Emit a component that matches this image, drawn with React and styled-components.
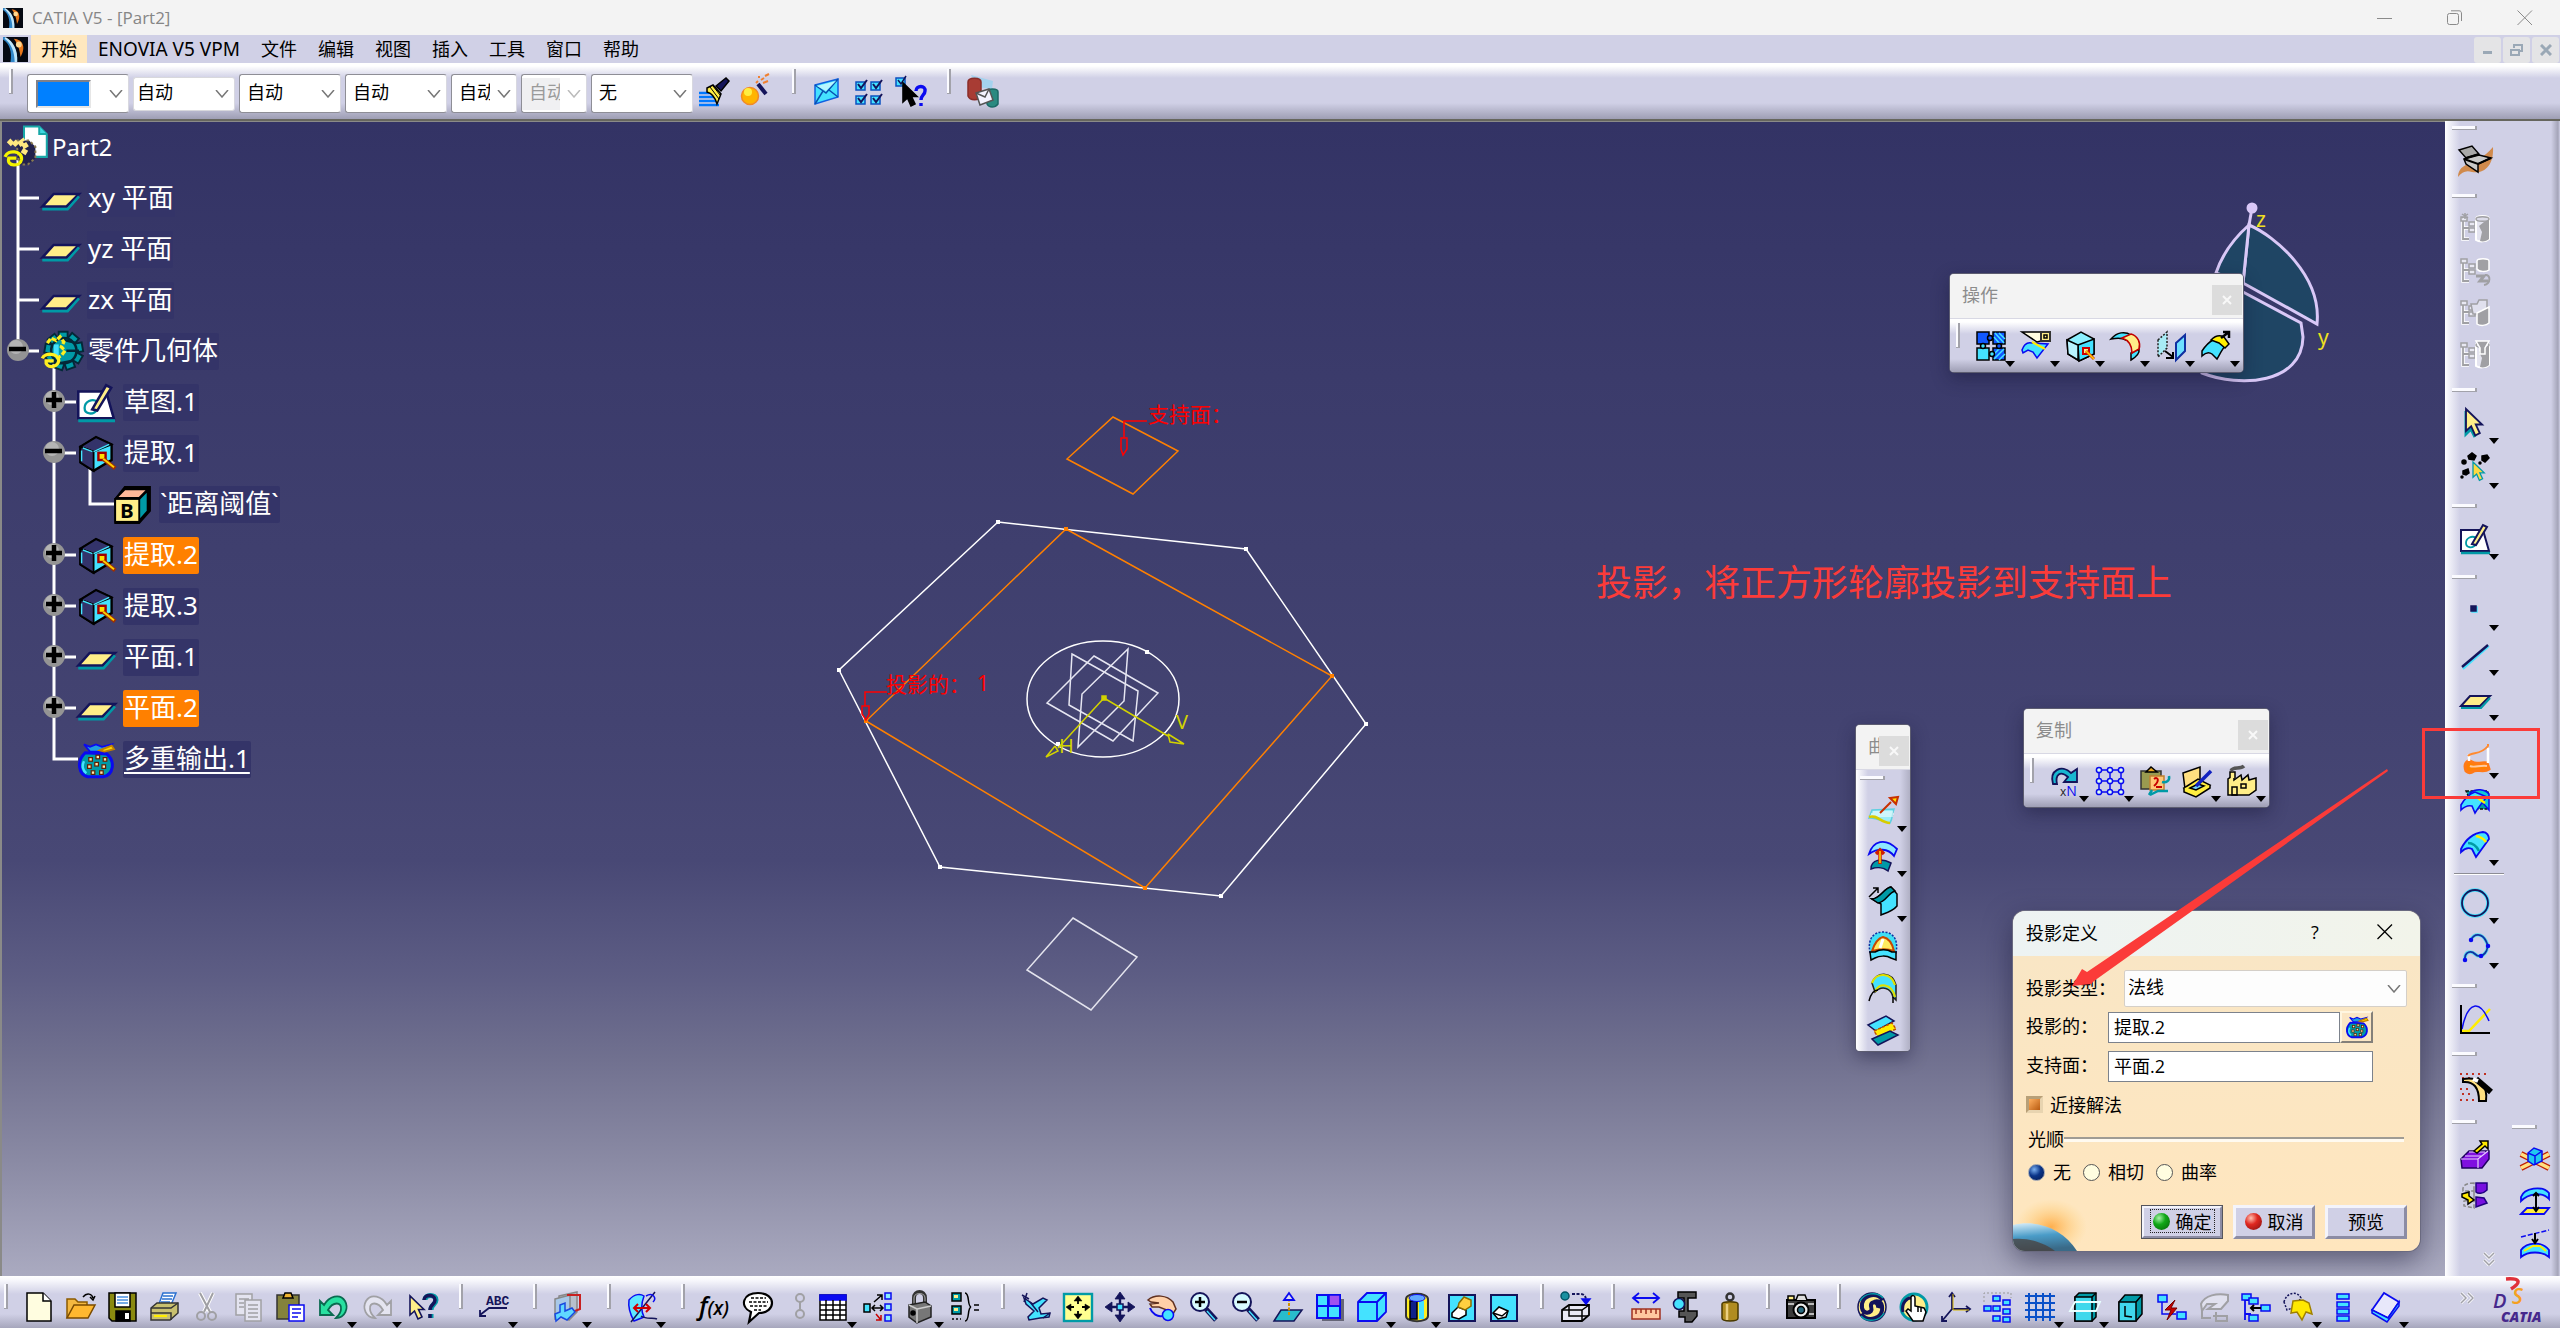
import React from 'react';
import styled, { createGlobalStyle, css } from 'styled-components';

const ui = '"Open Sans", "Noto Sans CJK SC", sans-serif';
const cad = '"Noto Sans", "Noto Sans CJK SC", sans-serif';
const C = {
  panel: '#d0d0e6', navy: '#14145a', blue: '#0a0af0', cyan: '#44e2ff', teal: '#009aa6',
  cream: '#ffee88', orange: '#ff8000', red: '#c80000', grey: '#a0a0a4', red2: '#fb3b39',
};

const Global = createGlobalStyle`
  * { box-sizing: border-box; }
  body { margin: 0; overflow: hidden; font-family: ${ui}; color: #000; }
  button, input, select { font: inherit; color: inherit; margin: 0; }
`;

/* ---------- icon drawings (30 x 30) ---------- */
const P = ({ d, f = 'none', s = '#000', w = 1.5, ...r }) => <path d={d} fill={f} stroke={s} strokeWidth={w} {...r} />;
const R = ({ x, y, w, h, f = 'none', s = '#000', k = 1.5, ...r }) => <rect x={x} y={y} width={w} height={h} fill={f} stroke={s} strokeWidth={k} {...r} />;
const O = ({ x, y, r, f = 'none', s = '#000', k = 1.5 }) => <circle cx={x} cy={y} r={r} fill={f} stroke={s} strokeWidth={k} />;

const SmallBoxes = ({ pts, w = 7, h = 5, s = C.blue, f = C.cyan }) => pts.map(([x, y]) => <R key={`${x}-${y}`} x={x} y={y} w={w} h={h} f={f} s={s} />);
const GreyTree = ({ children }) => (
  <>
    <P d="M3 6V25H9M3 14H9" s="#fff" w={3.5} />
    <P d="M3 6V25H9M3 14H9" s={C.grey} w={1.8} />
    <SmallBoxes pts={[[1, 3], [9, 8], [9, 14]]} s={C.grey} f="#e8e8f2" w={6} h={4} />
    {children}
  </>
);
const GreyCyl = () => (
  <><P d="M16 5C16 1 29 1 29 5V25C26 28 19 28 16 26Z" f="#e4e4f0" s="#fff" w={2} /><P d="M29 5V25C27 27 23 28 20 27L22 18L19 12L24 8Z" f={C.grey} s="none" /><P d="M16 5C16 2 29 2 29 5C29 8 16 8 16 5Z" f="#dcdcea" s={C.grey} /></>
);
const Cursor = ({ x = 0, y = 0, f = C.cream, s = C.navy }) => <P d="M0 0V19L4.500 15L8 23L12 21L8.500 13.500H14Z" f={f} s={s} w={1.6} transform={`translate(${x} ${y})`} />;
const Cube = ({ right }) => (
  <>
    <P d="M2 9L15 1L28 7V20L13 29L2 22Z" f={C.cyan} s="#000" w={2} />
    <P d="M2 9L13 13L28 7L15 1Z" f={right} s="#000" w={1.5} />
    <P d="M2 9L13 13V29L2 22Z" f={right} s="#000" w={1.5} />
    <P d="M4 10L12 13M13 13L26 7M3 12V21" s={C.cyan} w={1.2} />
  </>
);

const ICONS = {
  app: <><rect width="30" height="30" fill="#050912" /><P d="M2 0C12 6 18 16 17 30H9C11 18 8 8 0 3V0Z" f="#2f86c8" s="none" /><P d="M3 0C13 6 18 16 17 30H14C14 18 10 8 2 2Z" f="#bfe6fa" s="none" /><P d="M13 2C24 3 28 12 21 24C20 15 18 8 13 2Z" f="#e8781c" s="none" /><O x={19} y={9} r={3.500} f="#ffd890" s="none" /></>,
  brush: <><P d="M0 16H12M0 20H15M0 24H18M0 28H20" s="#0078ff" w={2.4} /><P d="M8 11L14 8L22 17L18 27C16 20 12 16 8 15Z" f="#ffee44" /><P d="M11 10L20 22M14 9L21 18" w={1} /><P d="M17 9L27 1L30 4L22 14Z" f={C.navy} /></>,
  wand: <><O x={9} y={19} r={8.500} f="#ffb400" s="#f08a28" /><O x={7} y={15} r={4} f="#ffee40" s="none" /><P d="M17 7L25 17" s={C.navy} w={4} /><P d="M15 6L17 4M20 3L23 1M22 6L27 4M18 1V-1M24 -1L28 -3" s="#f08030" w={2} /></>,
  mail: <><P d="M3 8L26 2V20L3 27Z" f={C.cyan} s="#1060e0" /><P d="M3 8L14 16L26 2M3 27L11 14M26 20L17 13" s="#0a50b0" /><P d="M5 9L24 4L14 14Z" f="#b8f6ff" s="none" /></>,
  grid4: <>{[[1, 4], [16, 4], [1, 18], [16, 18]].map(([x, y]) => <g key={x + '-' + y} transform={`translate(${x} ${y})`}><R x={1} y={1} w={9} h={8} f={C.cyan} s="#0a50c0" /><P d="M3 3L6 7L12 -1" s={C.navy} w={2} /></g>)}</>,
  whatis: <><R x={0} y={1} w={9} h={8} f={C.cyan} s="#0a50c0" /><P d="M2 3L5 7L10 -1" s={C.navy} /><Cursor x={7} y={6} f="#000" s="#000" /><P d="M20 14C20 8 30 8 29 14C29 18 25 18 25 23M25 26V29" s={C.blue} w={3.4} /></>,
  catalog: <><P d="M4 -2L26 4L25 12L10 10Z" f="#a4d2ee" s="none" /><P d="M1 5C1 0 14 0 14 5V19C12 24 3 24 1 19Z" f="#a83c34" s="#8a2c28" /><P d="M20 15C20 11 31 11 31 15V27C28 31 22 31 20 27Z" f="#2a8a80" s="#1b6a66" /><P d="M9 16L22 12L26 23L13 28Z" f="#f4f4ff" s="#555" /><P d="M9 16L18 20L22 12" s="#555" /></>,
  join: <><R x={1} y={1} w={12} h={12} f="#1258ff" /><R x={17} y={1} w={12} h={12} f="#1258ff" /><R x={1} y={17} w={12} h={12} f={C.cyan} /><R x={17} y={17} w={12} h={12} f="#1258ff" /><P d="M19 2L28 12M18 6L24 13M23 2L29 8M18 28L28 18M18 23L24 17M23 29L29 23" s={C.cyan} /><O x={14} y={7} r={2.500} f="#1258ff" /><O x={7} y={15} r={2.500} f={C.cyan} /><O x={23} y={15} r={2.500} f="#1258ff" /><O x={16} y={23} r={2.500} f={C.cyan} /></>,
  split: <><P d="M1 19C3 13 7 11 11 12L27 13L16 27L12 21L7 19L2 22Z" f={C.cyan} s={C.blue} /><P d="M11 11L24 18" s="#ffee00" w={2} /><P d="M1 1H20V10L16 11Z" f="#fffbe0" /><R x={20} y={1} w={9} h={9} f={C.cream} s="#333" k={2} /><R x={23} y={4} w={3} h={3} /></>,
  extract: <><P d="M1 9L15 1L28 8V23L13 30L2 23Z" f="#8cf0ff" /><P d="M12 14L28 8V23L13 30Z" f={C.cyan} /><P d="M1 9L12 14V29L2 23Z" f="#b8f4ff" /><R x={17} y={17} w={6} h={6} f={C.cream} s="#c00" k={2} /><P d="M20 20L28 28" s="#e04000" w={3} /><P d="M20 20L28 28" s="#ffd000" /></>,
  extractDark: <><Cube right="#33336a" /><R x={17} y={14} w={6} h={6} f="#ffe000" s="#a00000" k={2} /><P d="M21 19L31 27" s="#a03000" w={3.400} /><P d="M21 19L30 26" s="#ffd000" w={1.600} /></>,
  fillet: <><P d="M0 8C6 1 14 0 20 4L15 9C10 6 5 7 0 8Z" f={C.cyan} /><P d="M20 29V22L28 18C29 23 25 26 20 29Z" f={C.cyan} /><P d="M11 7L20 3C27 5 30 12 28 18L21 22C21 14 17 9 11 7Z" f={C.cream} s="#c00000" w={1.600} /></>,
  translate: <><P d="M2 9L11 1V17L2 26Z" f="#a8ecf6" s="#222" strokeDasharray="2 1.5" /><P d="M20 12L29 4V20L20 29Z" f="#6ee0ff" s="#1030a0" w={2} /><P d="M9 20L17 26M17 21V27H10" w={2} /></>,
  extrap: <><P d="M1 20C5 14 8 11 12 9L25 14C21 18 19 23 16 28L11 23C7 20 4 22 1 25Z" f={C.cyan} /><P d="M10 9C14 5 19 4 23 6L28 13L24 17L18 12Z" f="#ffee00" /><P d="M20 7L28 1M22 1H28V7" w={2.5} /></>,
  rotN: <><P d="M3 18C-1 4 12 -2 21 7L27 3V16H14L18 11C10 4 5 9 7 18Z" f="#18b8d0" s={C.navy} w={1.8} /><text x="10" y="30" fontSize="12" fontFamily={ui} fill="#222">x<tspan fill={C.blue} fontSize="14">N</tspan></text></>,
  pattern: <><P d="M4 3V27M15 3V27M26 3V27M3 4H27M3 15H27M3 26H27" s={C.blue} />{[4, 15, 26].map((x) => [4, 15, 26].map((y) => <O key={x + '-' + y} x={x} y={y} r={2.600} f="#dfe" s={C.blue} />))}</>,
  paste2: <><R x={1} y={5} w={20} h={18} f="#9a9a50" s="#333" /><P d="M6 6L11 1L17 6Z" f="#e8a820" /><P d="M10 10H24V24H10Z" f="#ffc878" s="#c08030" /><P d="M14 13C18 10 20 15 14 20M16 21H22" s={C.red} w={2} /><P d="M10 29L18 25H28M29 10C30 15 26 17 22 16M12 24L9 29" s={C.teal} w={2.5} /></>,
  power: <><P d="M1 7L18 1V14L3 23Z" f="#ffdf80" /><P d="M2 22L16 13L28 19L14 28Z" f="#ffee40" /><P d="M2 22V26L14 31L28 22V19" f="#ffee40" /><P d="M8 22L16 18L22 20L14 24Z" f="#6cd0ff" /><P d="M14 20L29 5" s="#1020c0" w={3.5} /></>,
  factory: <><P d="M1 29V13L7 9V14L14 9L15 14L21 9L22 14L29 12V24L22 29Z" f={C.cream} /><P d="M3 12V6H8V12" f={C.cream} /><P d="M4 5C6 0 13 4 17 0" s="#555" w={3.5} /><R x={5} y={21} w={5} h={8} /><R x={14} y={18} w={5} h={4} /></>,
  sweep: <><P d="M4 14L26 13C24 18 25 22 22 27C15 27 10 21 1 22Z" f="#9cecf6" s="#60cfe0" /><P d="M3 18H26M2 20H25M5 16H25" s="#fff" w={1} /><P d="M1 21C9 18 13 27 22 27" s="#d8cc00" w={2.5} /><P d="M12 17L23 6M22 2L30 1L28 8Z" f="#ffe000" s="#c83000" w={2} /></>,
  offset: <><P d="M1 13C5 0 17 -4 29 8L26 15C20 7 10 7 1 13Z" f="#8ee8ff" s={C.blue} w={1.800} /><P d="M3 28C3 18 14 17 23 22L20 30C15 26 8 26 3 28Z" f={C.teal} s={C.navy} /><P d="M12 23V10M8 13L12 9L16 13" s="#d02000" w={3.5} /><P d="M12 22V10" s="#ffe000" /></>,
  revolve: <><P d="M1 11L10 2M5 2H10V7" /><P d="M4 13C12 13 16 2 23 1L29 8V20C25 25 18 27 13 29V18Z" f={C.cyan} /><P d="M4 13C12 13 16 2 23 1L27 5C20 7 18 16 10 17Z" f={C.teal} /></>,
  fillS: <><P d="M2 22C-1 6 7 1 15 1C23 1 31 6 28 22Z" f="#40dff4" s="#1030a0" strokeDasharray="2 1.5" /><P d="M4 20C7 11 11 7 15 6C20 7 24 11 26 20C18 17 11 18 4 20Z" f="#ffea60" s="#c84800" w={2} /><P d="M15 8L12 17" s="#fff" w={3} /><P d="M2 21H7C12 18 19 18 24 21H28V29L23 27C18 24 11 25 7 27L3 29Z" f={C.cyan} /></>,
  blend: <><P d="M4 10C8 -2 24 -2 28 12V27L25 24C23 15 14 12 7 19Z" f={C.cyan} s="#222" /><P d="M4 10C8 -1 23 -1 27 12M7 19C10 9 24 10 27 24" s="#e0e000" w={2.200} /><P d="M1 28C3 20 6 17 10 17M25 24V30" /></>,
  layers: <><P d="M0 10L18 1L26 6L8 16Z" f={C.cyan} s={C.navy} /><P d="M6 16L24 8L28 14L10 22Z" f="#ffee00" s="#c05000" strokeDasharray="3 1.500" /><P d="M4 24L22 16L30 20L10 30Z" f={C.teal} s={C.navy} /></>,
  workbench: <><P d="M-2 31C-1 14 16 22 33 1C34 20 24 28 12 26C6 24 2 26 -2 31Z" f="#d08a4c" s="none" /><P d="M-1 4L12 0L19 8L6 12Z" f="#a8a8a8" /><P d="M4 13L19 9L31 12L18 18V26L6 18Z" f="#c8c8c8" /><P d="M4 13L18 18L31 12M6 12L19 8" w={2} /></>,
  g1: <GreyTree><GreyCyl /><P d="M5 -1V5M2 0L8 4M8 0L2 4" s={C.grey} /></GreyTree>,
  g2: <GreyTree><P d="M17 5C17 2 29 2 29 5V14C26 16 19 16 17 13Z" f={C.grey} s="#fff" /><P d="M16 20H24L20 25H28" s={C.grey} w={3} /><P d="M25 19C31 18 31 28 24 29" s={C.grey} w={2} /></GreyTree>,
  g3: <GreyTree><P d="M11 6H17L19 2H27V16H13Z" f="#e0e0ee" s={C.grey} /><P d="M17 15L29 9V25C26 28 20 28 17 26Z" f={C.grey} s="#fff" /></GreyTree>,
  g4: <GreyTree><GreyCyl /><P d="M16 1H29L25 8V14H20V8Z" f={C.grey} s="#fff" /></GreyTree>,
  select: <><P d="M6 3V26L11 21L15 29" s={C.teal} w={3} /><g transform="translate(6 1) scale(1.15)"><Cursor /></g></>,
  multi: <><P d="M8 3L12 0L16 3L14 7L9 6ZM22 3L27 2L29 5L25 9L22 7ZM3 18L8 16L9 20L6 22L3 21Z" f="#000" /><O x={4} y={9} r={2} f="#000" /><O x={2} y={24} r={1} f="#000" /><O x={20} y={10} r={1} f="#000" /><g transform="translate(13 9) scale(.8)"><Cursor f="#ffd840" s={C.teal} /></g></>,
  sketch: <><P d="M1 6H23L29 27H1Z" f="#fff" s={C.navy} w={2} /><P d="M1 29H30" s={C.teal} w={2.5} /><P d="M16 14C12 11 6 14 6 19C6 24 13 25 16 20" s={C.teal} w={1.8} /><P d="M12 20L23 1L27 3L16 21Z" f={C.cream} s={C.navy} w={2} /></>,
  point: <><R x={12} y={12} w={5} h={5} f={C.cyan} s={C.cyan} /><R x={11} y={11} w={5} h={5} f={C.navy} s={C.navy} /></>,
  line: <><P d="M3 29L29 6" s={C.cyan} w={2} /><P d="M2 27L28 5" s={C.navy} w={2.4} /></>,
  plane: <><P d="M1 21L10 11H30L20 21Z" f={C.cream} s={C.navy} w={2} /><P d="M1 23H21L30 13" s={C.teal} w={2} /></>,
  project: <><P d="M6 28C3 20 8 16 12 19C16 22 20 19 27 20L29 26C24 30 18 26 14 28C11 30 8 30 6 28Z" f={C.orange} s="#ff7a18" w={3} /><P d="M10 23C14 25 20 22 27 23" s="#ffc9a0" w={2} /><P d="M9 18V11M28 20V5" s="#fff" w={2.5} /><P d="M8 13C12 8 20 13 28 3V1" s="#ff8a30" w={2} /></>,
  intersect: <><P d="M6 3H28V21H14Z" f={C.teal} s="#111" strokeDasharray="3 1.500" /><P d="M10 5C16 0 25 1 29 6V22L22 14Z" f="#10c8d8" s={C.blue} /><P d="M1 17C5 10 9 6 15 4L27 9C23 13 20 17 15 25L12 18C8 17 4 19 1 22Z" f={C.cyan} s={C.blue} w={1.600} /><P d="M15 8L25 15" s="#ffee00" w={2.500} /></>,
  surf: <><P d="M1 19C6 9 14 3 23 2C27 2 29 6 29 9L16 27L12 19C8 17 4 19 1 22Z" f={C.cyan} s={C.blue} w={1.800} /><P d="M8 13C14 13 17 17 19 21" s={C.teal} w={2.5} /><P d="M16 6C21 7 24 9 26 12" s="#ffee00" w={2.5} /></>,
  circle: <><ellipse cx="15" cy="15" rx="13" ry="13" fill="none" stroke={C.cyan} strokeWidth="3.5" /><ellipse cx="15" cy="15" rx="13" ry="13" fill="none" stroke={C.navy} strokeWidth="1.8" /></>,
  spline: <><P d="M5 28C4 17 12 18 15 21C22 28 31 16 26 8C22 0 14 0 11 7" s="#60dcf0" w={3.5} /><P d="M5 28C4 17 12 18 15 21C22 28 31 16 26 8C22 0 14 0 11 7" s="#1030a0" w={1.8} /><O x={5} y={27} r={1.500} f={C.blue} s={C.blue} /><O x={11} y={7} r={1.500} f={C.blue} s={C.blue} /><O x={28} y={13} r={1.500} f={C.blue} s={C.blue} /><O x={21} y={23} r={1.500} f={C.blue} s={C.blue} /></>,
  graph: <><P d="M2 27L9 27L30 5" s="#ffee00" w={2.500} /><P d="M2 25C8 -4 20 -4 29 17" s={C.blue} /><P d="M1 1V29H30" w={2} /></>,
  magic: <><P d="M0 2H28M2 6H14M0 17H10M2 22H14M0 28H14" s="#c03020" w={2} strokeDasharray="2 4" /><P d="M3 10C14 9 19 16 19 29H26C28 14 20 4 3 7Z" f="#ffdf80" w={2} /><P d="M16 7L31 20" w={6} /><P d="M13 7L18 9" s="#fff" w={4} /></>,
  extrude: <><P d="M1 19L9 11H29V19L22 28H2Z" f="#8010e0" s="#200060" /><P d="M1 19H18L28 11M18 19V28M5 16H22M9 12H25" s="#e8d0ff" w={1.2} /><P d="M14 11L22 4L20 1L28 1L28 9L25 6L17 13Z" f="#ffe800" /></>,
  mirror: <><P d="M16 1H27V8C23 12 18 12 16 10ZM16 15L24 16L27 21L16 25Z" f="#7810e0" s="#200080" /><P d="M14 1C7 1 2 3 3 9H14V17L4 19V24L14 26Z" s="#888" strokeDasharray="4 2" /><P d="M2 12L9 10V14L14 18L8 22V18L2 15Z" f="#ffe800" /></>,
  cubeX: <><P d="M1 9L29 23M29 9L1 23" s="#c02000" w={6} /><P d="M1 9L29 23M29 9L1 23" s="#ffdf80" w={3.5} /><P d="M8 8L14 3L22 6V16L14 20L8 16Z" f="#20c8f0" s={C.blue} /><P d="M8 8L15 11L22 6M15 11V20" s={C.blue} /></>,
  arr1: <><P d="M1 10C4 1 22 -2 29 6V12C22 4 8 7 1 14Z" f={C.cyan} s={C.blue} w={1.8} /><P d="M1 27L7 21H29L24 27Z" f="#ffee40" s={C.blue} w={1.800} /><P d="M16 6V23M13 9L16 6L19 9M13 20L16 24L19 20" w={2} /></>,
  arr2: <><P d="M1 8L29 1" s={C.blue} strokeDasharray="5 2" /><P d="M1 28V21C7 13 22 12 29 21V28C22 22 8 22 1 28Z" f={C.cyan} s={C.blue} w={1.800} /><P d="M4 22L13 17H20L26 22" s="#ffee00" w={2} /><P d="M15 4V14M12 10L15 14L18 10" w={2} /></>,
  new: <><P d="M3 1H19L27 9V29H3Z" f="#fffde0" /><P d="M19 1V9H27" f="#fff" /></>,
  open: <><P d="M1 26V7H9L12 10H21V14" f="#f4b840" s="#8a5a00" /><P d="M1 26L8 13H29L22 26Z" f="#ffb830" s="#7a4a00" /><P d="M17 5C21 0 26 2 27 6M24 5L27 8L29 4" /></>,
  save: <><P d="M1 1H28V29H4L1 26Z" f="#8a8a10" /><R x={7} y={1} w={15} h={14} f="#fff" /><P d="M9 5H20M9 8H20M9 11H20" s="#4a90e0" /><R x={8} y={19} w={14} h={10} f="#000" /><R x={17} y={21} w={4} h={6} f="#fff" s="none" /></>,
  print: <><P d="M9 12L13 1H26L21 13Z" f="#fff" s="#2a70d0" /><P d="M13 4H23M12 7H22M11 10H20" s="#2a70d0" /><P d="M1 16L7 11H28V21L20 28H1Z" f="#c8c070" s="#333" /><P d="M1 16H21L28 11M1 21H21V28" s="#333" /><P d="M4 24H17" s="#ffee00" w={2} /></>,
  cut: <><P d="M8 1L18 20M21 1L12 20" s="#fff" w={4} /><P d="M8 1L18 20M21 1L12 20" s={C.grey} w={2} /><O x={9} y={24} r={4} s={C.grey} k={2} /><O x={20} y={24} r={4} s={C.grey} k={2} /></>,
  copy: <><R x={2} y={2} w={16} h={21} f="#e4e4f0" s={C.grey} /><R x={11} y={8} w={16} h={21} f="#e4e4f0" s={C.grey} /><P d="M5 7H15M5 11H10M5 15H10M14 13H24M14 17H24M14 21H24M14 25H24" s={C.grey} /></>,
  paste: <><R x={1} y={3} w={22} h={24} f="#84823c" s="#333" /><P d="M7 6L9 1H15L17 6Z" f="#f0b430" /><R x={13} y={13} w={15} h={16} f="#fff" s={C.blue} /><P d="M16 17H25M16 21H25M16 25H22" s={C.blue} /></>,
  undo: <P d="M2 9V23H15L10 18C15 9 24 10 23 17C23 21 21 23 18 26C27 26 31 16 27 9C22 1 11 4 6 13Z" f="#28e0a0" s="#0a6a50" w={1.8} />,
  redo: <P d="M28 9V23H15L20 18C15 9 6 10 7 17C7 21 9 23 12 26C3 26 -1 16 3 9C8 1 19 4 24 13Z" f="#e4e4f0" s={C.grey} w={1.8} />,
  help: <><Cursor x={2} y={4} /><P d="M17 8C17 2 28 2 28 8C28 13 23 12 23 18M23 22V26" s={C.teal} w={5} /><P d="M16 8C16 2 27 2 27 8C27 13 22 12 22 18M22 22V26" s={C.navy} w={3.5} /></>,
  abc: <><text x="7" y="13" fontSize="13" fontWeight="700" fontFamily='"Liberation Mono", monospace' fill={C.navy}>ABC</text><P d="M28 16H10L1 23M1 18V24H7" s={C.navy} w={1.8} /></>,
  stamp: <><P d="M6 4L24 0V20L16 28L6 24Z" f="#b8c0cc" s="#888" /><P d="M2 7L17 3V22L2 27Z" f="#a8c8e8" s="#888" /><P d="M14 3H27V17L17 21" s="#c82020" w={2} /><P d="M7 13L12 11V19L19 16L22 20L14 28L8 25L3 29L2 22L7 20Z" f="#60d8ff" s="#1848e0" /></>,
  measureSurf: <><P d="M2 8C8 1 14 2 17 4C14 12 14 19 17 25L7 29C3 22 1 15 2 8Z" f="#60e8ff" s={C.blue} /><P d="M4 30L28 0M14 24C20 28 26 25 30 27" s={C.navy} /><P d="M8 16H22M11 12L7 16L11 20M19 12L23 16L19 20" s="#d00000" w={2} /><P d="M19 4C26 0 30 6 26 10" s={C.blue} /></>,
  fx: <text x="-2" y="23" fontSize="25" fontStyle="italic" fontWeight="600" fontFamily={ui} fill="#000">f<tspan fontSize="19">(x)</tspan></text>,
  comment: <><P d="M15 1C34 1 33 21 16 21L6 30L8 20C-4 14 0 1 15 1Z" f="#fff" w={2.200} /><P d="M8 6H23M6 10H25M7 14H24M11 18H18" strokeDasharray="3 1.500" /></>,
  chain: <><O x={15} y={6} r={4} s={C.grey} k={2} /><O x={15} y={22} r={4} s={C.grey} k={2} /><P d="M15 10V18" s={C.grey} w={2} /></>,
  table: <><R x={2} y={3} w={26} h={25} f="#fff" /><R x={2} y={3} w={26} h={5} f={C.blue} s={C.blue} /><P d="M2 13H28M2 18H28M2 23H28M8 8V28M15 8V28M22 8V28" /></>,
  tree: <><R x={1} y={12} w={6} h={8} f={C.cyan} /><SmallBoxes pts={[[22, 1], [22, 12], [22, 23]]} w={6} h={6} f="#8ef" /><P d="M9 16H20M12 13L9 16L12 19M17 13L20 16L17 19M11 10L19 3M14 3H19V8" /><P d="M13 22L18 28M18 23V28H13" s={C.red} /></>,
  lock: <><P d="M9 12V6C9 -2 20 -2 20 6V11" s="#333" w={4} /><P d="M9 12V6C9 0 20 0 20 6V11" s="#999" w={1.2} /><P d="M4 13L20 10L26 14V25L12 31L4 25Z" f="#777" s="#222" /><P d="M12 17V31M12 17L26 14M4 13L12 17" s="#ccc" /><O x={8} y={21} r={2} f="#000" /></>,
  rules: <><R x={2} y={1} w={9} h={8} f={C.teal} /><R x={2} y={14} w={9} h={8} f={C.teal} /><R x={4} y={3} w={4} h={3} f={C.cream} s="none" /><R x={4} y={16} w={4} h={3} f={C.cream} s="none" /><P d="M2 27H11" strokeDasharray="2 2" /><P d="M15 1C20 1 17 14 21 15C17 16 20 29 15 29M24 13H29M24 18H29" /></>,
  fly: <><P d="M3 6L12 12L22 6L26 8L18 16L20 22L29 21L28 25L19 26L8 28L7 25L13 19L5 12Z" f={C.cyan} s={C.navy} /><P d="M1 3L8 7M6 1L3 10M22 26L29 21M9 10L17 20" s={C.navy} /></>,
  fit: <><R x={1} y={2} w={28} h={27} f="#ffff90" s={C.teal} k={2.400} /><P d="M15 12V6M15 19V25M11 15H5M19 15H25" w={1.800} /><P d="M11 9L15 4L19 9ZM11 22L15 27L19 22ZM8 12L3 15L8 19ZM22 12L27 15L22 19Z" f="#000" w={.5} /></>,
  pan: <><P d="M15 4V26M4 15H26" s={C.navy} w={2.400} /><P d="M10 7L15 0L20 7ZM10 23L15 30L20 23ZM7 10L0 15L7 20ZM23 10L30 15L23 20Z" f={C.navy} s={C.navy} w={.8} /><R x={12} y={12} w={6} h={6} f={C.cyan} s={C.navy} /></>,
  rotate: <><P d="M1 8C8 2 20 3 26 10L29 17L24 25L20 18L12 15H5L3 12L12 11L4 10Z" f="#ffd0a8" s="#603020" /><O x={21} y={23} r={5.500} f={C.cyan} s={C.blue} /><P d="M3 16C5 22 11 25 15 24" s={C.blue} w={2} /></>,
  zin: <><P d="M17 17L27 28" s={C.navy} w={5} /><P d="M18 19L26 28" s={C.cyan} w={1.5} /><O x={11} y={10} r={9} f="#d8fbff" s={C.navy} k={2} /><P d="M6 10H16M11 5V15" w={2.5} /></>,
  zout: <><P d="M17 17L27 28" s={C.navy} w={5} /><P d="M18 19L26 28" s={C.cyan} w={1.5} /><O x={11} y={10} r={9} f="#d8fbff" s={C.navy} k={2} /><P d="M6 10H16" w={2.5} /></>,
  normal: <><P d="M1 29L8 18H29L21 29Z" f="#28bccc" s={C.navy} /><P d="M16 23V3" s="#d09000" strokeDasharray="3 1.500" w={2} /><P d="M11 8L16 1L21 8Z" s={C.blue} w={1.800} f="#dde" /></>,
  views: <><R x={7} y={7} w={22} h={22} f="#667" s="none" /><R x={2} y={3} w={23} h={23} f={C.cyan} s={C.blue} k={2} /><R x={14} y={3} w={11} h={11} f="#a050f0" s={C.blue} /><P d="M2 14H25M13 3V26" s={C.blue} w={2} /></>,
  iso: <><P d="M1 10L10 1H29V20L20 29H1Z" f={C.cyan} s={C.blue} w={1.800} /><P d="M1 10H20L29 1M20 10V29" s={C.blue} w={1.8} /></>,
  shade: <><P d="M4 7C4 0 26 0 26 7V24C26 31 4 31 4 24Z" f="#ffee20" s="#333" w={2} /><R x={8} y={9} w={7} h={18} f="#10208a" s="#000" /><R x={17} y={9} w={5} h={18} f={C.cyan} s="none" /><ellipse cx="15" cy="6" rx="8" ry="3.500" fill="#60a8ff" stroke={C.blue} /></>,
  hide: <><R x={2} y={3} w={26} h={26} f={C.cyan} s={C.navy} k={2} /><P d="M5 21L11 15L19 18V23L12 27L5 25Z" f="#fff" /><P d="M12 11L17 5L24 8V14L18 18L11 15Z" f="#ffd040" s="#8a6a00" /></>,
  swap: <><R x={2} y={3} w={26} h={26} f={C.cyan} s={C.navy} k={2} /><P d="M4 21L10 15L19 19L17 25L9 27Z" f="#fff" /><P d="M4 21L13 24L19 19" /></>,
  box3d: <><P d="M2 18L9 13H29V23L22 29H2Z" f="#e8e8f4" w={1.8} /><P d="M2 18H22L29 13M22 18V29M9 13V24H28" /><O x={5} y={4} r={4} f="#1890a0" s="#056" /><P d="M12 2H20C25 2 26 5 26 9" s={C.navy} w={2} strokeDasharray="3 1.500" /><P d="M22 7L26 12L30 7Z" f={C.blue} s={C.blue} /></>,
  ruler: <><P d="M2 6H28M8 1L2 6L8 11M22 1L28 6L22 11" s={C.blue} w={1.8} /><R x={1} y={17} w={28} h={10} f="#ffc8a0" s="#a03020" /><P d="M5 17V22M10 17V21M15 17V22M20 17V21M25 17V22" s="#a03020" /></>,
  caliper: <><P d="M5 0H23V6H15V19H24V24L19 30H12V25H6V19H11V6H5Z" f="#555" /><O x={6} y={12} r={5.500} f={C.cyan} s={C.navy} /></>,
  weight: <><O x={15} y={5} r={3.500} s="#333" k={2.500} /><P d="M7 12C7 9 23 9 23 12V26C23 30 7 30 7 26Z" f="#b08c20" s="#4a3a00" /><P d="M12 12V28" s="#ecd080" w={2.500} /></>,
  camera: <><R x={1} y={8} w={28} h={18} f="#3a3a3a" k={2} /><R x={2} y={4} w={6} h={4} f={C.cream} /><P d="M10 8L12 3H19L21 8" f="#ddd" /><P d="M2 12H8M22 12H28M23 22H28" s="#bbb" w={2} /><O x={15} y={18} r={7.500} f="#eee" k={2} /><O x={15} y={18} r={3.500} f="#2a6a80" /></>,
  update: <><O x={15} y={15} r={14} f={C.cream} s={C.navy} k={1.500} /><P d="M26 8C19 -1 3 3 5 16C6 21 11 22 14 19C16 16 12 14 15 11C18 9 22 12 21 16M4 22C11 31 27 27 25 14C24 9 19 8 16 11" s={C.navy} w={4} /><P d="M3 9C7 1 20 -1 26 6M27 21C23 29 10 31 4 24" s={C.teal} w={1.500} /></>,
  manual: <><O x={15} y={15} r={13} f={C.cream} s={C.teal} k={3} /><P d="M4 20C2 11 8 5 14 6" s={C.navy} w={3} /><P d="M12 5C13 3 16 3 16 6V14L25 16L27 20L24 29H14L7 19L9 17L12 19Z" f="#fff" /><P d="M19 15V20M22 16V20" /></>,
  axis: <><P d="M11 17V1M11 17H29M11 17L1 29M8 5L11 1L14 5M25 14L29 17L25 20M1 24V29H6" s={C.navy} w={1.800} /><P d="M12 2V18H28" s="#d8b800" w={1} /></>,
  struct: <><SmallBoxes pts={[[10, 4], [20, 8], [1, 14], [10, 14], [20, 17], [10, 24], [20, 25]]} /><P d="M1 10V1H28V6" s="#999" strokeDasharray="2 2" w={1} /></>,
  grid: <P d="M4 1V29M11 1V29M18 1V29M25 1V29M0 4H30M0 11H30M0 18H30M0 25H30" s="#0a50c8" w={2} />,
  thick: <><P d="M5 5L9 1H26V25L22 29H5Z" f={C.teal} /><R x={5} y={5} w={17} h={24} f="#40d8ec" /><P d="M22 5L26 1" /><P d="M0 19L5 10H30L26 19Z" s="#e8ffff" w={1.800} /></>,
  cube: <><P d="M4 10L10 3H27V22L21 29H4Z" f={C.teal} /><R x={4} y={10} w={17} h={19} f="#40d8ec" /><P d="M21 10L27 3M10 14V24L17 25" /></>,
  bolt: <><SmallBoxes pts={[[1, 3], [20, 20]]} w={9} h={7} /><P d="M5 10V22H19" s={C.blue} /><P d="M18 8L8 18H14L10 28L20 16H14Z" f={C.red} s="#700" w={1} /></>,
  hand: <><P d="M2 12C6 3 18 1 29 3V9L22 17H9L16 12H8L3 19Z" f="#e0e0ee" s={C.grey} w={2} /><P d="M3 18V26H12M14 24H28V29H17V20" s={C.grey} w={2} /></>,
  insert: <><P d="M4 5V28M4 8H10M4 22H10M12 16H20" s={C.blue} w={1.800} /><SmallBoxes pts={[[1, 2], [8, 6], [8, 23], [20, 13]]} w={9} h={6} /><P d="M10 16H20M13 13L10 16L13 19" w={2} /></>,
  shape: <><P d="M1 10C3 1 14 -2 18 6L12 15L4 18Z" s={C.navy} strokeDasharray="2 1.500" /><P d="M10 9L20 8L26 11L29 22L23 20L19 28L14 20L8 21Z" f="#ffe800" s="#a08000" /></>,
  stack: <SmallBoxes pts={[[9, 2], [9, 10], [9, 17], [9, 24]]} w={12} h={5} />,
  eraser: <><P d="M2 18L14 1L29 10L18 26Z" f="#e8e8fa" s={C.blue} w={1.800} /><P d="M2 18V21L17 30L29 14V10L18 26Z" f={C.cyan} s={C.blue} /></>,
  sack: <><P d="M6 9C-2 17 1 27 8 29H21C30 27 31 16 24 10Z" f={C.teal} s={C.blue} w={2.500} /><P d="M5 16C3 20 4 24 7 26" s={C.cyan} w={2} /><P d="M5 2L10 8H22L28 2L20 4L15 2L10 4Z" f="#20a0e0" s={C.blue} /><P d="M18 7L28 3L30 6L22 8Z" f="#ffd800" s="#c08000" />{[[10, 14], [16, 12], [22, 14], [9, 20], [15, 18], [21, 20], [12, 25], [19, 25]].map(([x, y]) => <R key={x + '-' + y} x={x - 1} y={y - 1} w={3} h={3} f="#ffe8b0" s="#602000" k={1} />)}</>,
  gear: <>{[0, 40, 80, 120, 160, 200, 240, 280, 320].map((a) => <R key={a} x={14} y={-1} w={7} h={7} f={C.teal} s="#042838" transform={`rotate(${a} 18 14)`} />)}<O x={18} y={14} r={10} f={C.teal} s="#042838" k={2} /><P d="M14 24L25 22M16 5L28 8M20 14H30" s="#042838" w={2} /><P d="M5 8L8 4L12 6L15 3L18 7L16 11L19 14L16 18L12 20" s="#ffee20" w={2.600} strokeDasharray="4 1.500" /><P d="M12 9V18" s={C.cyan} w={4} /><P d="M1 20C3 15 14 16 14 22C13 28 3 28 4 22H10" s="#ffee20" w={2.600} /></>,
  part: <><P d="M15 -2H27L33 4V22H15Z" f="#fff" s="#18a8a8" w={1.600} /><P d="M27 -2V4H33" f="#40d8e0" s="#18a8a8" /><P d="M9 9H19L24 14V23L18 28H11Z" f="#22224c" s="#887a50" strokeDasharray="2 2" /><P d="M3 12L6 9L10 13L14 10L17 15L14 20" s="#ffe880" w={4.500} strokeDasharray="4 1.500" /><P d="M0 22C2 16 14 17 13 24C12 30 1 30 3 23H9" s="#f4f400" w={2.600} /></>,
  block: <><P d="M1 10L9 0H30V20L21 30H1Z" f="#000" /><P d="M2 9L9 2H28L21 9Z" f="#ffb898" /><P d="M21 10L28 3V20L21 28Z" f={C.teal} /><R x={1} y={10} w={20} h={19} f={C.cream} /><text x="5" y="26" fontSize="17" fontWeight="700" fontFamily={ui}>B</text></>,
};

const IconSvg = styled.svg`
  width: ${(p) => p.$size || 30}px;
  height: ${(p) => p.$size || 30}px;
  overflow: visible;
  display: block;
  flex: none;
`;
const Icon = ({ name, size }) => <IconSvg $size={size} viewBox="0 0 30 30" aria-hidden="true">{ICONS[name]}</IconSvg>;

/* ---------- tool slots and sections ---------- */
const ToolButton = styled.button`
  display: grid;
  grid-template: 36px 9px / 36px 9px;
  width: ${(p) => (p.$narrow ? 33 : p.$v || p.$arrow ? 45 : 42)}px;
  height: ${(p) => (p.$v && !p.$arrow ? 42 : 45)}px;
  margin: 0;
  padding: 0;
  border: 0;
  background: none;
  flex: none;
  align-content: start;
  justify-content: start;
  & > svg:first-child { place-self: end; }
`;
const Tri = styled.svg`
  grid-area: 2 / 2;
  width: 10px;
  height: 6px;
  justify-self: end;
`;
const Tool = ({ spec, v }) => {
  const name = spec.replace(/[*-]/g, '');
  const arrow = spec.includes('*');
  return (
    <ToolButton $v={v} $arrow={arrow} $narrow={spec.includes('-')} aria-label={name}>
      <Icon name={name} />
      {arrow && <Tri viewBox="0 0 10 6"><path d="M0 0H10L5 6Z" /></Tri>}
    </ToolButton>
  );
};

const Section = styled.div`
  display: flex;
  flex-direction: ${(p) => (p.$v ? 'column' : 'row')};
  align-items: flex-start;
  flex: none;
  ${(p) => (p.$v ? css`padding-bottom: 10px;` : css`padding-right: 13px;`)}
`;
const Grip = styled.span`
  flex: none;
  ${(p) => (p.$v ? css`width: 25px; height: 4px; margin: 2px 0 10px;` : css`width: 4px; height: 25px; margin: 0 10px 0 2px;`)}
  background: #fbfbff;
  border-right: 2px solid #a2a2aa;
  border-bottom: 1px solid #a2a2aa;
`;
const Slots = styled.div`
  display: flex;
  flex-direction: ${(p) => (p.$v ? 'column' : 'row')};
  ${(p) => (p.$v ? css`padding-left: 2px;` : css`padding-top: 2px;`)}
`;
const Divider = styled.hr`
  width: 50px;
  height: 2px;
  margin: 4px 0 7px;
  border: 0;
  border-top: 1px solid #8c8c94;
  background: #fff;
  align-self: flex-start;
`;
const Tools = ({ list, v }) => (
  <Section $v={v}>
    <Grip $v={v} />
    <Slots $v={v}>{list.split(' ').map((t, i) => (t === '|' ? <Divider key={i} /> : <Tool key={i} spec={t} v={v} />))}</Slots>
  </Section>
);

/* ---------- frame ---------- */
const Page = styled.div`
  position: relative;
  height: 100vh;
  display: grid;
  grid-template-rows: 35px 28px 58px minmax(0, 1fr) 52px;
  background: ${C.panel};
`;
const TitleBar = styled.header`
  display: flex;
  align-items: center;
  padding: 0 0 0 3px;
  background: #f3f3f3;
  color: #868686;
  font-size: 17px;
`;
const Title = styled.h1`
  margin: 0;
  padding-left: 9px;
  flex: 1;
  font: inherit;
`;
const CaptionButton = styled.button`
  width: 70px;
  height: 34px;
  border: 0;
  padding: 0;
  background: none;
  display: grid;
  place-items: center;
`;
const MenuBar = styled.nav`
  display: flex;
  align-items: stretch;
  gap: 1px;
  padding-left: 3px;
  font-size: 18px;
  background: ${C.panel};
`;
const AppMark = styled.span`
  width: 27px;
  display: flex;
  align-items: center;
`;
const MenuItem = styled.button`
  border: 0;
  padding: 0 10px;
  background: ${(p) => (p.$on ? '#ffe8bf' : 'none')};
  font-size: ${(p) => (p.$latin ? 19 : 18)}px;
  font-family: ${cad};
  line-height: 26px;
  white-space: nowrap;
`;
const MdiButtons = styled.div`
  margin-left: auto;
  display: flex;
  gap: 2px;
  padding: 2px 1px 0 0;
`;
const MdiButton = styled.button`
  width: 27px;
  height: 26px;
  border: 0;
  border-radius: 3px;
  padding: 0;
  background: #e4e4e6;
  display: grid;
  place-items: center;
`;
const barFill = css`background: linear-gradient(#fff 0, #fff 3px, ${C.panel} 15px, ${C.panel} 40px, #9e9eb4 100%);`;
const TopBar = styled.div`
  display: flex;
  align-items: flex-start;
  padding: 6px 0 0 7px;
  ${barFill}
  border-bottom: 2px solid #66665e;
`;
const Combos = styled.div`
  display: flex;
  align-items: center;
  gap: 4px;
  height: 49px;
  padding-left: 4px;
`;
const ComboBox = styled.label`
  display: grid;
  width: ${(p) => p.$w}px;
  height: ${(p) => (p.$flat ? 34 : 39)}px;
  align-items: center;
  background: #fff;
  border: 1px solid ${(p) => (p.$flat ? '#d8d8dc' : '#8e8e96')};
  border-right-color: #d8d8e0;
  border-radius: 3px;
  overflow: hidden;
  & > * { grid-area: 1 / 1; }
`;
const Select = styled.select`
  appearance: none;
  min-width: 0;
  width: ${(p) => (p.$clip ? 'calc(100% - 26px)' : '100%')};
  height: 32px;
  padding: 0 0 4px ${(p) => p.$pad || 7}px;
  border: 0;
  background: ${(p) => (p.disabled ? '#f0f0f2' : 'transparent')};
  color: ${(p) => (p.disabled ? '#9a9a9a' : '#000')};
  opacity: 1;
  font-size: 18px;
  text-overflow: clip;
`;
const Chevron = styled.svg`
  width: 14px;
  height: 8px;
  justify-self: end;
  margin-right: 5px;
  pointer-events: none;
`;
const Swatch = styled.span`
  width: 55px;
  height: 28px;
  margin-left: 8px;
  background: #0080ff;
  border: 2px solid #808088;
  border-right-color: #e6e6e6;
  border-bottom-color: #e6e6e6;
  pointer-events: none;
`;
const Combo = ({ w, text, label, swatch, disabled, flat }) => (
  <ComboBox $w={w} $flat={flat}>
    <Select aria-label={label} disabled={disabled} $clip={w < 80} $pad={flat ? 3 : 7} defaultValue="0"><option value="0">{text}</option></Select>
    {swatch && <Swatch />}
    <Chevron viewBox="0 0 14 8"><path d="M1 0L7 7L13 0" fill="none" stroke={disabled ? '#bbb' : '#777'} strokeWidth="1.5" /></Chevron>
  </ComboBox>
);

const Body = styled.main`
  display: grid;
  grid-template-columns: minmax(0, 1fr) 115px;
  min-height: 0;
`;
const Viewport = styled.section`
  position: relative;
  overflow: hidden;
  border-left: 2px solid #8a8a88;
  border-top: 1px solid #8a8a88;
  background: linear-gradient(#333365 0, #3b3b6b 22%, #434371 52%, #484875 64%, #5d5d84 74%, #70708f 81%, #8a8aa4 90%, #aaaac0 100%);
`;
const Tree = styled.ul`
  position: relative;
  margin: 0 0 0 -2px;
  padding: 0;
  list-style: none;
  font-family: ${cad};
  font-size: 26px;
  color: #fff;
`;
const TreeRow = styled.li`
  display: flex;
  align-items: center;
  height: 51px;
`;
const Joint = styled.svg`
  width: 36px;
  height: 51px;
  flex: none;
  overflow: visible;
`;
const TreeIcon = styled.span`
  display: grid;
  width: 48px;
  height: 51px;
  place-items: center;
  & > * { grid-area: 1 / 1; }
  & > ${Joint} { justify-self: start; }
`;
const NodeLabel = styled.span`
  margin-left: 3px;
  padding: 0 1px;
  height: 37px;
  line-height: 35px;
  border-radius: 2px;
  white-space: pre;
  font-size: ${(p) => (p.$plain ? 24 : 26)}px;
  background: ${(p) => (p.$hot ? C.orange : p.$plain ? 'none' : '#343468')};
  text-decoration: ${(p) => (p.$under ? 'underline' : 'none')};
  text-decoration-thickness: 2px;
  text-underline-offset: 4px;
`;
const JointArt = ({ kind }) => (
  <Joint aria-hidden="true">
    <g stroke="#fff" strokeWidth="3" fill="none">
      {kind === 'tee' && <path d="M18 0V51M18 25H39" />}
      {kind === 'line' && <path d="M18 0V51" />}
      {kind === 'end' && <path d="M18 0V25H42" />}
      {kind === 'last' && <path d="M18 0V25M28 25H39" />}
      {kind === 'start' && <path d="M18 38V51" />}
      {(kind === 'plus' || kind === 'minus') && <path d="M18 0V51M28 25H40" />}
    </g>
    {(kind === 'plus' || kind === 'minus' || kind === 'last') && (
      <>
        <circle cx="18" cy="24" r="11" fill="#949494" />
        <circle cx="16" cy="21" r="7" fill="#b4b4b4" />
        <path d={kind === 'plus' ? 'M10 23H26M18 15V31' : 'M9 23H26'} stroke="#000" strokeWidth="4.500" />
      </>
    )}
  </Joint>
);
const TREE = [
  { j: [], icon: 'part', t: 'Part2', start: true, plain: true },
  { j: ['tee'], icon: 'plane', t: 'xy 平面' },
  { j: ['tee'], icon: 'plane', t: 'yz 平面' },
  { j: ['tee'], icon: 'plane', t: 'zx 平面' },
  { j: ['last'], icon: 'gear', t: '零件几何体', start: true },
  { j: ['', 'plus'], icon: 'sketch', t: '草图.1' },
  { j: ['', 'minus'], icon: 'extractDark', t: '提取.1', start: true },
  { j: ['', 'line', 'end'], icon: 'block', t: '`距离阈值`' },
  { j: ['', 'plus'], icon: 'extractDark', t: '提取.2', hot: true },
  { j: ['', 'plus'], icon: 'extractDark', t: '提取.3' },
  { j: ['', 'plus'], icon: 'plane', t: '平面.1' },
  { j: ['', 'plus'], icon: 'plane', t: '平面.2', hot: true },
  { j: ['', 'end'], icon: 'sack', t: '多重输出.1', under: true },
];
const WIDE_ICONS = ['part', 'gear', 'plane', 'sketch'];

const Scene = styled.svg`
  position: absolute;
  inset: 0;
  width: 100%;
  height: 100%;
  pointer-events: none;
  font-family: ${cad};
`;
const Dot = ({ x, y, c = '#fff' }) => <rect x={x - 2} y={y - 2} width="4" height="4" fill={c} />;
const HEX = [[998, 522], [1246, 549], [1366, 724], [1221, 896], [940, 867], [839, 670]];
const SQUARE = [[1066, 529], [1332, 676], [1145, 888], [866, 721]];

const Note = styled.p`
  position: absolute;
  left: 1594px;
  top: 435px;
  margin: 0;
  font-size: 36px;
  line-height: 52px;
  color: ${C.red2};
  white-space: nowrap;
`;

/* ---------- floating windows ---------- */
const Palette = styled.section`
  position: absolute;
  left: ${(p) => p.$x}px;
  top: ${(p) => p.$y}px;
  width: ${(p) => p.$w}px;
  border-radius: 4px;
  overflow: hidden;
  background: ${C.panel};
  box-shadow: 0 0 0 1px #5c5c70, 0 6px 18px rgba(20, 20, 50, 0.45);
`;
const PaletteHead = styled.header`
  display: flex;
  align-items: center;
  height: 45px;
  padding: 0 1px 0 12px;
  background: #f3f3f3;
  color: #8c8c8c;
  font-size: 18px;
  border-bottom: 1px solid #d8d8e4;
`;
const PaletteTitle = styled.h2`
  margin: 0;
  flex: 1;
  min-width: 0;
  overflow: hidden;
  white-space: nowrap;
  font: inherit;
  line-height: 24px;
  padding-bottom: 2px;
`;
const PaletteClose = styled.button`
  flex: none;
  align-self: flex-end;
  width: 30px;
  height: 30px;
  margin-bottom: 3px;
  padding: 0;
  border: 0;
  background: #dcdcdc;
  display: grid;
  place-items: center;
`;
const PaletteBar = styled.div`
  ${(p) => (p.$v
    ? css`padding: 4px 0 0 4px; background: linear-gradient(90deg, #fff 0, ${C.panel} 12px, ${C.panel} 44px, #b0b0c4 100%); ${Section} { padding-bottom: 0; }`
    : css`padding: 4px 0 0 4px; height: 53px; ${barFill}`)}
`;
const FloatingTools = ({ x, y, w, title, list, v }) => (
  <Palette $x={x} $y={y} $w={w}>
    <PaletteHead>
      <PaletteTitle>{title}</PaletteTitle>
      <PaletteClose aria-label="关闭"><svg width="10" height="10"><path d="M1 1L9 9M9 1L1 9" stroke="#f8f8f8" strokeWidth="2" /></svg></PaletteClose>
    </PaletteHead>
    <PaletteBar $v={v}><Tools list={list} v={v} /></PaletteBar>
  </Palette>
);

const Dialog = styled.form`
  position: absolute;
  left: 2011px;
  top: 789px;
  width: 407px;
  border-radius: 12px;
  overflow: hidden;
  font-size: 18px;
  background: linear-gradient(#f8e6c6, #ffe6be);
  box-shadow: 0 0 0 1px #6a6a80, 0 10px 28px rgba(20, 20, 50, 0.5);
`;
const DialogHead = styled.header`
  display: flex;
  align-items: center;
  height: 45px;
  padding: 0 0 3px 13px;
  background: linear-gradient(90deg, #edf3f3, #f2f4ea);
`;
const DialogTitle = styled.h2`
  flex: 1;
  margin: 0;
  font: inherit;
`;
const DialogBody = styled.div`
  display: flex;
  flex-direction: column;
  padding: 14px 13px 0;
`;
const Field = styled.div`
  display: flex;
  align-items: center;
  height: ${(p) => (p.$tall ? 37 : 32)}px;
  margin-bottom: ${(p) => (p.$tall ? 4 : 7)}px;
`;
const FieldLabel = styled.label`
  width: ${(p) => (p.$wide ? 98 : 82)}px;
  flex: none;
  white-space: nowrap;
  line-height: 24px;
  padding-bottom: 2px;
`;
const WideCombo = styled.div`
  flex: 1;
  display: grid;
  align-items: center;
  height: 37px;
  background: #fdfdfd;
  border: 1px solid #d4cfc8;
  border-radius: 2px;
  & > * { grid-area: 1 / 1; }
`;
const TextBox = styled.input`
  min-width: 0;
  width: ${(p) => (p.$short ? 232 : 265)}px;
  height: 31px;
  padding: 0 5px 2px;
  border: 1px solid #7c828c;
  background: #fff;
`;
const PickButton = styled.button`
  width: 33px;
  height: 32px;
  padding: 0;
  display: grid;
  place-items: center;
  background: #fbe6c4;
  border: 2px solid #fff6e0;
  border-right-color: #84807a;
  border-bottom-color: #84807a;
`;
const CheckRow = styled.label`
  display: flex;
  align-items: center;
  gap: 7px;
  height: 31px;
  line-height: 24px;
`;
const Check = styled.input`
  appearance: none;
  width: 17px;
  height: 17px;
  margin: 0;
  border: 3px solid #e8d4b0;
  border-top-color: #b8a078;
  border-left-color: #b8a078;
  background: linear-gradient(135deg, #ffb060, #b85a10);
`;
const Group = styled.fieldset`
  margin: 5px 3px 0 0;
  padding: 0 0 0 2px;
  border: 0;
  min-width: 0;
`;
const Legend = styled.legend`
  display: flex;
  align-items: center;
  width: 100%;
  padding: 0;
  line-height: 28px;
  &::after { content: ''; flex: 1; height: 3px; border-top: 2px solid #a09c94; background: #fffaf0; }
`;
const Radios = styled.div`
  display: flex;
  gap: 12px;
  padding-top: 7px;
`;
const RadioLabel = styled.label`
  display: flex;
  align-items: center;
  gap: 8px;
  line-height: 24px;
`;
const Radio = styled.input`
  appearance: none;
  width: 17px;
  height: 17px;
  margin: 0;
  border-radius: 50%;
  border: 1px solid #555;
  background: #fffde0;
  &:checked { background: radial-gradient(circle at 35% 30%, #7ab0f0, #0a3488 45%, #04184c); border-color: #98a0b0; }
`;
const Actions = styled.div`
  display: flex;
  align-items: stretch;
  justify-content: flex-end;
  gap: 10px;
  height: 67px;
  padding: 21px 0 12px;
`;
const ActionButton = styled.button`
  display: flex;
  align-items: center;
  justify-content: center;
  gap: 6px;
  width: 82px;
  padding: 0 0 2px;
  background: ${C.panel};
  border: 3px solid #f4f4fb;
  border-right-color: #8c8ca4;
  border-bottom-color: #8c8ca4;
  outline: ${(p) => (p.$main ? '1px solid #55555c' : 'none')};
  outline-offset: -1px;
`;
const FocusFrame = styled.span`
  display: flex;
  align-items: center;
  gap: 6px;
  height: 24px;
  padding: 0 2px;
  border: 1px dotted #222;
`;
const Lamp = styled.i`
  width: 17px;
  height: 17px;
  border-radius: 50%;
  background: ${(p) => (p.$c === 'g' ? 'radial-gradient(circle at 35% 30%, #a8f0a8, #10a818 40%, #046008)' : 'radial-gradient(circle at 35% 30%, #ffc0b0, #e02820 40%, #801010)')};
`;
const Planet = styled.svg`
  position: absolute;
  left: 0;
  bottom: 0;
  width: 74px;
  height: 52px;
`;

/* ---------- right dock and bottom bar ---------- */
const Dock = styled.aside`
  display: flex;
  min-height: 0;
  padding: 3px 0 0 7px;
  background: linear-gradient(90deg, #fff 0, #f4f4fa 3px, ${C.panel} 15px, ${C.panel} 106px, #a4a4b8 113px, ${C.panel} 100%);
`;
const DockColumn = styled.div`
  display: flex;
  flex-direction: column;
  width: ${(p) => p.$w}px;
  flex: none;
  ${(p) => p.$end && css`justify-content: flex-end; padding-bottom: 1px;`}
`;
const More = styled.button`
  border: 0;
  padding: 0;
  background: none;
  ${(p) => (p.$down ? css`margin: auto 0 5px 30px; align-self: flex-start;` : css`margin: 4px 16px 0 auto;`)}
`;
const MoreArt = ({ down }) => (
  <svg width="14" height="14"><g transform={down ? 'rotate(90 7 7)' : undefined}><path d="M1 2L6 7L1 12M8 2L13 7L8 12" fill="none" stroke="#fff" strokeWidth="3" /><path d="M1 2L6 7L1 12M8 2L13 7L8 12" fill="none" stroke="#a0a0a8" strokeWidth="1.500" /></g></svg>
);
const BottomBar = styled.footer`
  display: flex;
  align-items: flex-start;
  overflow: hidden;
  padding: 8px 8px 0 2px;
  background: linear-gradient(#fff 0, #f8f8fc 4px, ${C.panel} 18px, ${C.panel} 38px, #a6a6bc 100%);
`;
const Logo = styled.svg`
  flex: none;
  width: 62px;
  height: 50px;
  margin-top: -7px;
`;
const Markup = styled.svg`
  position: absolute;
  inset: 0;
  width: 100%;
  height: 100%;
  pointer-events: none;
`;

const TOP = ['mail grid4 whatis', 'catalog'];
const BOTTOM = [
  'new open save print cut copy paste undo* redo* help', 'abc*', 'stamp*', 'measureSurf*',
  'fx comment chain- table* tree lock* rules',
  'fly fit pan rotate zin zout normal views iso* shade* hide swap', 'box3d', 'ruler caliper weight', 'camera',
  'update manual axis struct grid* thick* cube bolt hand insert shape* stack eraser*',
];
const DOCK = ['workbench', 'g1 g2 g3 g4', 'select* multi*', 'sketch*', 'point* line* plane* | project* intersect surf* | circle* spline*', 'graph', 'magic', 'extrude mirror'];

export default function App() {
  return (
    <>
      <Global />
      <Page>
        <TitleBar>
          <Icon name="app" size={20} />
          <Title>CATIA V5 - [Part2]</Title>
          <CaptionButton aria-label="最小化"><svg width="16" height="16"><path d="M0 8.500H15" stroke="#8a8a8a" /></svg></CaptionButton>
          <CaptionButton aria-label="还原"><svg width="16" height="16" fill="none" stroke="#8a8a8a"><rect x=".5" y="3.500" width="11" height="11" rx="2" /><path d="M4 .8H12C14 .8 14.500 2 14.500 4V11" /></svg></CaptionButton>
          <CaptionButton aria-label="关闭窗口"><svg width="16" height="16"><path d="M.5 .5L15 15M15 .5L.5 15" stroke="#8a8a8a" /></svg></CaptionButton>
        </TitleBar>
        <MenuBar>
          <AppMark><Icon name="app" size={25} /></AppMark>
          {['开始', 'ENOVIA V5 VPM', '文件', '编辑', '视图', '插入', '工具', '窗口', '帮助'].map((m, i) => (
            <MenuItem key={m} $on={i === 0} $latin={i === 1}>{m}</MenuItem>
          ))}
          <MdiButtons>
            <MdiButton aria-label="最小化文档"><svg width="12" height="12"><rect x="1" y="7" width="9" height="3" fill="#9aa8b6" /></svg></MdiButton>
            <MdiButton aria-label="还原文档"><svg width="13" height="13" fill="none" stroke="#9aa8b6" strokeWidth="2"><path d="M4 4V1H12V7H9" /><rect x="1" y="6" width="8" height="5" /></svg></MdiButton>
            <MdiButton aria-label="关闭文档"><svg width="12" height="12"><path d="M1 1L11 11M11 1L1 11" stroke="#9aa8b6" strokeWidth="3" /></svg></MdiButton>
          </MdiButtons>
        </MenuBar>
        <TopBar>
          <Section>
            <Grip />
            <Combos>
              <Combo w={102} label="颜色" text="" swatch />
              <Combo w={102} label="透明度" text="自动" flat />
              <Combo w={102} label="线宽" text="自动" />
              <Combo w={102} label="线型" text="自动" />
              <Combo w={66} label="点符号" text="自动" />
              <Combo w={66} label="渲染" text="自动" disabled />
              <Combo w={102} label="图层" text="无" />
            </Combos>
            <Slots><Tool spec="brush" /><Tool spec="wand" /></Slots>
          </Section>
          {TOP.map((l) => <Tools key={l} list={l} />)}
        </TopBar>
        <Body>
          <Viewport>
            <Scene aria-hidden="true">
              <g transform="translate(-2 -122)" fill="none" strokeWidth="1.5">
                <polygon points={HEX.join(' ')} stroke="#fff" />
                <polygon points="1073,918 1137,957 1091,1010 1027,970" stroke="#e4e4ee" />
                <ellipse cx="1103" cy="699" rx="76" ry="58" stroke="#fff" />
                <g stroke="#e6e6f2">
                  <polygon points="1094,656 1158,693 1113,741 1047,703" />
                  <polygon points="1072,654 1138,691 1133,741 1069,705" />
                  <polygon points="1128,649 1124,701 1078,747 1082,694" />
                </g>
                <polygon points={SQUARE.join(' ')} stroke={C.orange} />
                <polygon points="1113,417 1178,451 1133,494 1067,459" stroke={C.orange} />
                {[...HEX, [1147, 652], [1058, 744]].map(([x, y]) => <Dot key={x} x={x} y={y} />)}
                {SQUARE.map(([x, y]) => <Dot key={x} x={x} y={y} c={C.orange} />)}
                <g stroke="#d2d200">
                  <path d="M1168 736L1104 698L1058 748M1168 734L1184 744L1170 742L1168 734M1055 746L1046 757L1058 751L1055 746" />
                  <Dot x={1104} y={698} c="#d2d200" />
                </g>
                <text x="1176" y="729" fontSize="20" fill="#d2d200">V</text>
                <text x="1059" y="753" fontSize="20" fill="#d2d200">H</text>
                <g stroke="#f00" strokeWidth="1.5">
                  <path d="M1147 421H1124V438M1121 438H1127V449L1123 455L1121 449Z" />
                  <path d="M887 692H865V706M862 706H869V714L866 720L862 714Z" />
                </g>
                <g fill="#f00" fontSize="21">
                  <text x="1148" y="422">支持面：</text>
                  <text x="886" y="692">投影的：</text>
                  <text x="977" y="691">1</text>
                </g>
                <g stroke="#d9c8f7" strokeWidth="3" fill="#1f4564">
                  <path d="M2249 225C2275 236 2322 276 2317 324L2243 283Z" />
                  <path d="M2249 225C2232 240 2221 258 2216 273L2243 283Z" />
                  <path d="M2202 373C2240 388 2302 384 2303 337L2301 323L2243 292L2202 300Z" />
                  <path d="M2249 225L2252 208" />
                  <circle cx="2252" cy="208" r="4" fill="#d9c8f7" />
                </g>
                <g fill="#f0e020" fontSize="21">
                  <text x="2256" y="227">z</text>
                  <text x="2318" y="345">y</text>
                </g>
              </g>
            </Scene>
            <Tree>
              {TREE.map((n) => (
                <TreeRow key={n.t}>
                  {n.j.map((k, i) => <JointArt key={i} kind={k} />)}
                  <TreeIcon>
                    {n.start && <JointArt kind="start" />}
                    <Icon name={n.icon} size={WIDE_ICONS.includes(n.icon) ? 38 : 36} />
                  </TreeIcon>
                  <NodeLabel $hot={n.hot} $under={n.under} $plain={n.plain}>{n.t}</NodeLabel>
                </TreeRow>
              ))}
            </Tree>
            <Note>投影，将正方形轮廓投影到支持面上</Note>
            <FloatingTools x={1948} y={152} w={293} title="操作" list="join* split* extract* fillet* translate* extrap*" />
            <FloatingTools x={2022} y={587} w={245} title="复制" list="rotN* pattern* paste2 power* factory*" />
            <FloatingTools x={1854} y={603} w={54} title="曲面" list="sweep* offset* revolve* fillS blend layers" v />
            <Dialog onSubmit={(e) => e.preventDefault()}>
              <DialogHead>
                <DialogTitle>投影定义</DialogTitle>
                <CaptionButton type="button">?</CaptionButton>
                <CaptionButton type="button" aria-label="关闭对话框"><svg width="16" height="16"><path d="M.5 .5L15 15M15 .5L.5 15" stroke="#000" strokeWidth="1.300" /></svg></CaptionButton>
              </DialogHead>
              <DialogBody>
                <Field $tall>
                  <FieldLabel htmlFor="ptype" $wide>投影类型：</FieldLabel>
                  <WideCombo>
                    <Select id="ptype" $pad={3} defaultValue="n"><option value="n">法线</option></Select>
                    <Chevron viewBox="0 0 14 8"><path d="M1 0L7 7L13 0" fill="none" stroke="#777" strokeWidth="1.5" /></Chevron>
                  </WideCombo>
                </Field>
                <Field>
                  <FieldLabel htmlFor="proj">投影的：</FieldLabel>
                  <TextBox id="proj" $short defaultValue="提取.2" />
                  <PickButton type="button" aria-label="多重选择"><Icon name="sack" size={22} /></PickButton>
                </Field>
                <Field>
                  <FieldLabel htmlFor="sup">支持面：</FieldLabel>
                  <TextBox id="sup" defaultValue="平面.2" />
                </Field>
                <CheckRow><Check type="checkbox" defaultChecked />近接解法</CheckRow>
                <Group>
                  <Legend>光顺</Legend>
                  <Radios>
                    <RadioLabel><Radio type="radio" name="smooth" defaultChecked />无</RadioLabel>
                    <RadioLabel><Radio type="radio" name="smooth" />相切</RadioLabel>
                    <RadioLabel><Radio type="radio" name="smooth" />曲率</RadioLabel>
                  </Radios>
                </Group>
                <Actions>
                  <ActionButton $main><FocusFrame><Lamp $c="g" />确定</FocusFrame></ActionButton>
                  <ActionButton type="button"><Lamp $c="r" />取消</ActionButton>
                  <ActionButton type="button">预览</ActionButton>
                </Actions>
              </DialogBody>
              <Planet viewBox="0 0 74 52" aria-hidden="true">
                <defs>
                  <radialGradient id="glow"><stop offset="0" stopColor="#ffa030" stopOpacity=".8" /><stop offset="1" stopColor="#ffd070" stopOpacity="0" /></radialGradient>
                  <linearGradient id="globe" x1="0" y1="0" x2=".2" y2="1"><stop offset="0" stopColor="#d8eefa" /><stop offset=".5" stopColor="#4a9cc8" /><stop offset="1" stopColor="#3a6a88" /></linearGradient>
                </defs>
                <ellipse cx="38" cy="28" rx="36" ry="28" fill="url(#glow)" />
                <path d="M0 26C24 20 50 30 64 52H0Z" fill="url(#globe)" />
                <path d="M0 40C18 38 34 46 42 52H0Z" fill="#4a3c34" opacity=".7" />
              </Planet>
            </Dialog>
          </Viewport>
          <Dock>
            <DockColumn $w={60}>
              {DOCK.map((l) => <Tools key={l} list={l} v />)}
              <More $down aria-label="更多工具"><MoreArt down /></More>
            </DockColumn>
            <DockColumn $w={47} $end><Tools list="cubeX arr1 arr2" v /></DockColumn>
          </Dock>
        </Body>
        <BottomBar>
          {BOTTOM.map((l) => <Tools key={l} list={l} />)}
          <More aria-label="更多"><MoreArt /></More>
          <Logo viewBox="0 0 62 50" role="img" aria-label="DS CATIA">
            <path d="M16 2C30 1 32 5 21 12" fill="none" stroke="#e0303a" strokeWidth="3.500" />
            <text x="3" y="31" fontFamily={ui} fontSize="20" fontStyle="italic" fontWeight="600" fill="#46288c">D</text>
            <text x="22" y="27" fontFamily={ui} fontSize="21" fontStyle="italic" fontWeight="600" fill="#f6a020">S</text>
            <text x="11" y="45" fontFamily={ui} fontSize="14" fontStyle="italic" fontWeight="800" fill="#46288c">CATIA</text>
          </Logo>
        </BottomBar>
        <Markup aria-hidden="true">
          <rect x="2423.500" y="729.500" width="115" height="68" fill="none" stroke={C.red2} strokeWidth="3" />
          <path d="M2072 986L2082 969L2087 972L2387 769L2388 771L2094 981L2091 984Z" fill={C.red2} />
        </Markup>
      </Page>
    </>
  );
}
